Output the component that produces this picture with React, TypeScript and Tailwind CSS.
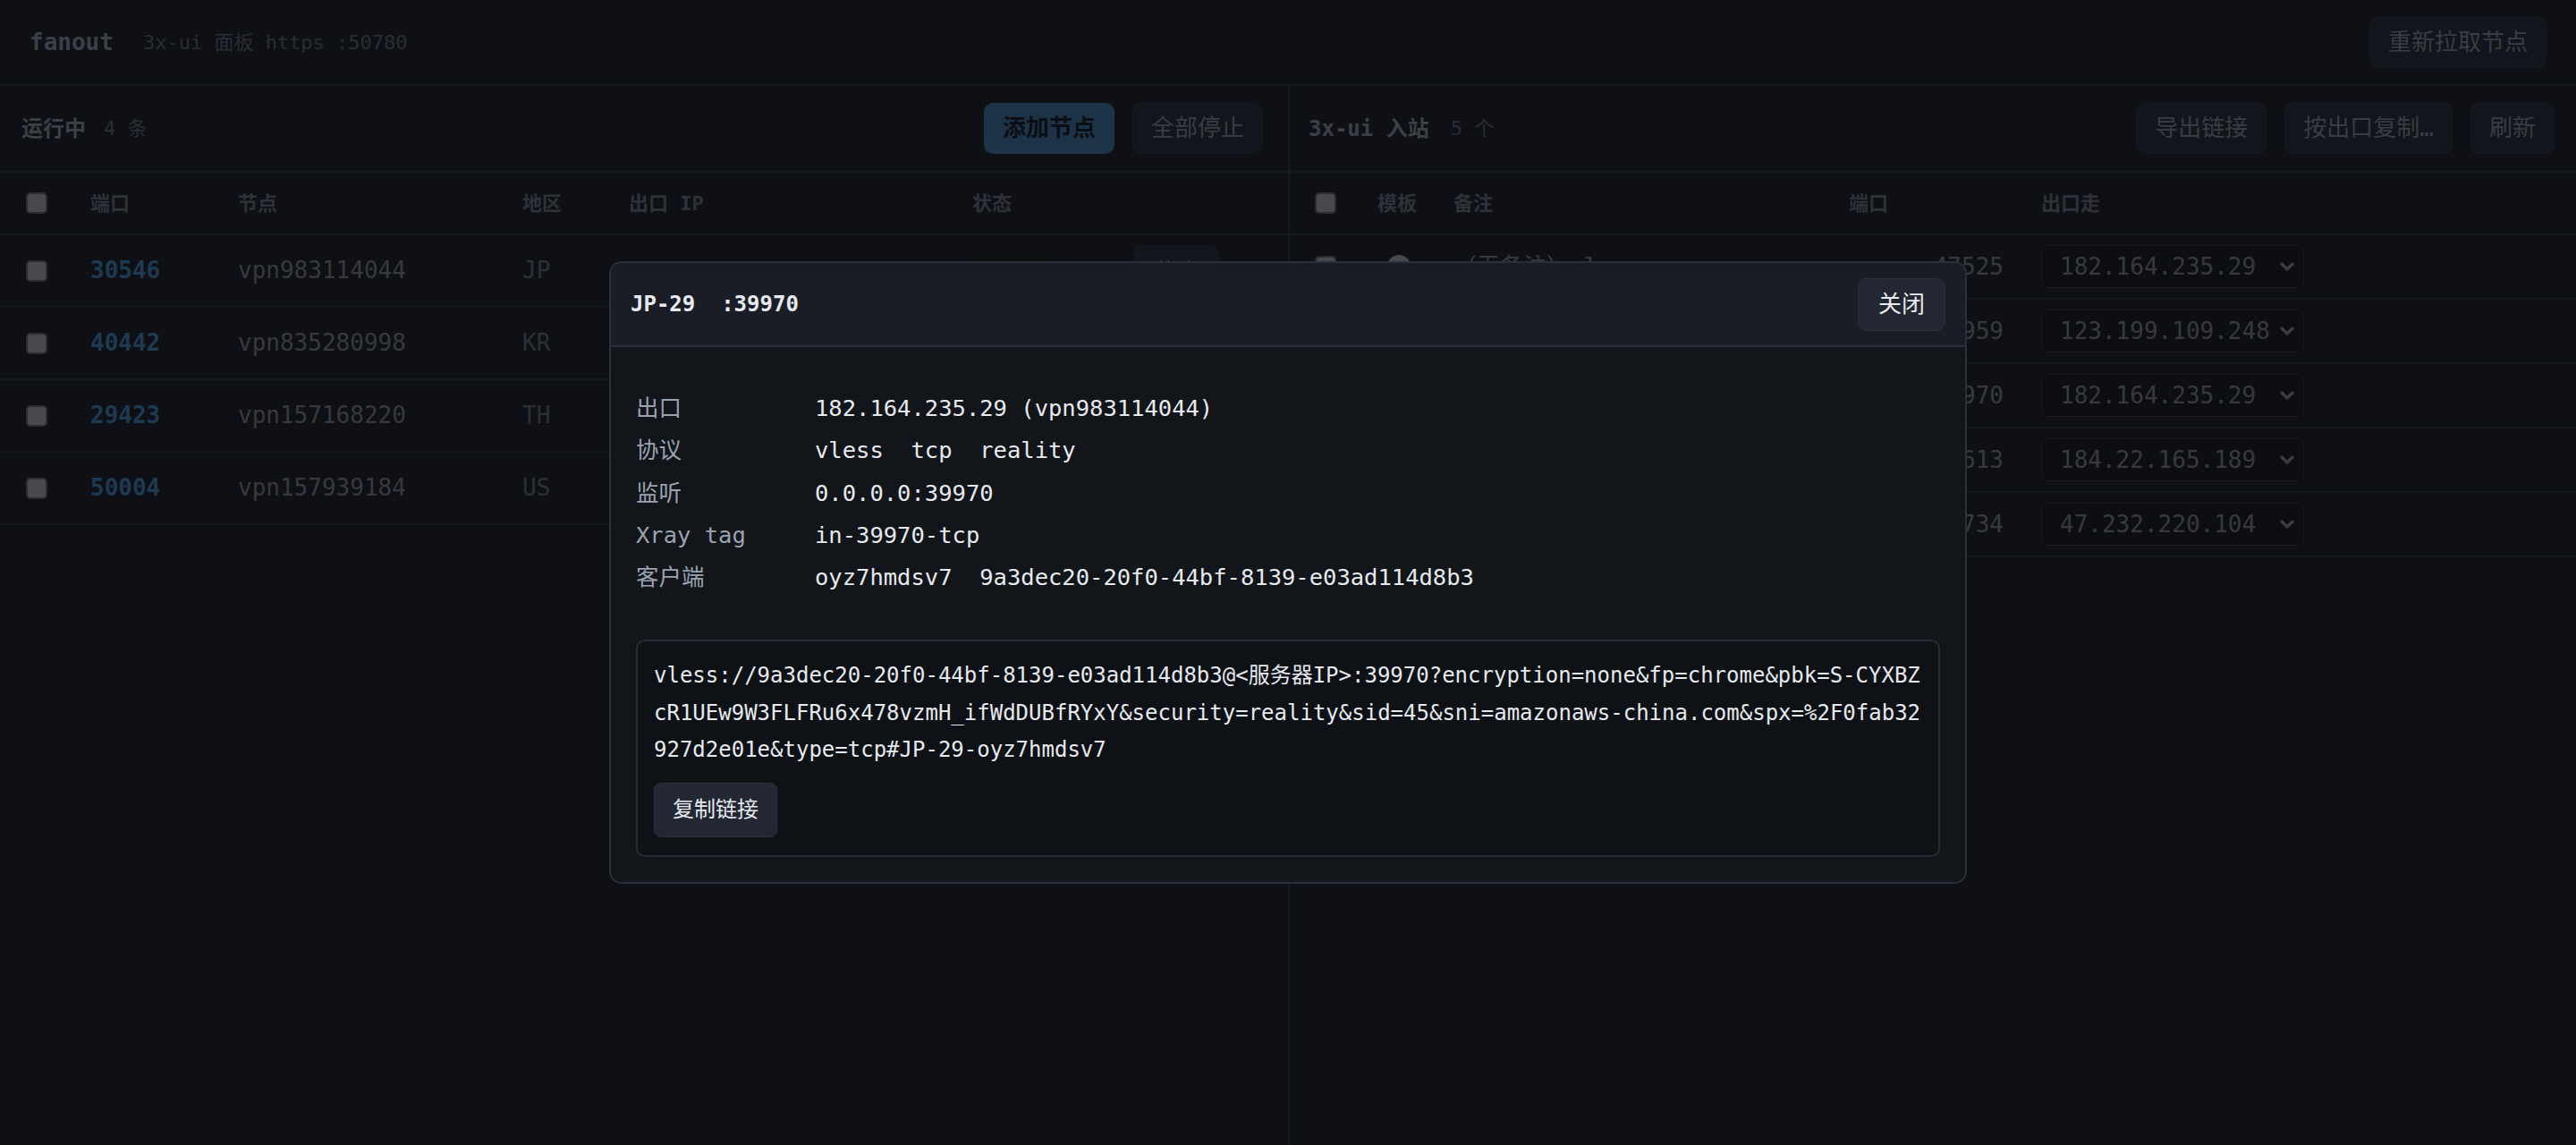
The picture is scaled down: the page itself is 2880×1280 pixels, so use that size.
import { ChevronDown } from "lucide-react";

const nodes = [
  { port: "30546", name: "vpn983114044", region: "JP", ip: "182.164.235.29" },
  { port: "40442", name: "vpn835280998", region: "KR", ip: "123.199.109.248" },
  { port: "29423", name: "vpn157168220", region: "TH", ip: "184.22.165.189" },
  { port: "50004", name: "vpn157939184", region: "US", ip: "47.232.220.104" },
];

const inbounds = [
  { remark: "（无备注）vless", port: "47525", exit: "182.164.235.29" },
  { remark: "（无备注）vless", port: "28959", exit: "123.199.109.248" },
  { remark: "JP-29", port: "39970", exit: "182.164.235.29" },
  { remark: "TH-13", port: "51613", exit: "184.22.165.189" },
  { remark: "US-04", port: "22734", exit: "47.232.220.104" },
];

const details = [
  ["出口", "182.164.235.29 (vpn983114044)"],
  ["协议", "vless  tcp  reality"],
  ["监听", "0.0.0.0:39970"],
  ["Xray tag", "in-39970-tcp"],
  ["客户端", "oyz7hmdsv7  9a3dec20-20f0-44bf-8139-e03ad114d8b3"],
];

const link =
  "vless://9a3dec20-20f0-44bf-8139-e03ad114d8b3@<服务器IP>:39970?encryption=none&fp=chrome&pbk=S-CYXBZcR1UEw9W3FLFRu6x478vzmH_ifWdDUBfRYxY&security=reality&sid=45&sni=amazonaws-china.com&spx=%2F0fab32927d2e01e&type=tcp#JP-29-oyz7hmdsv7";

function Checkbox() {
  return <div className="h-[24px] w-[24px] rounded-[5px] border-2 border-[#6b7079] bg-[#b2b7c1]" />;
}

function GhostButton({ children }: { children: React.ReactNode }) {
  return (
    <button className="h-[57px] rounded-[10px] border border-[#373f4b] bg-[#2d3544] px-[20px] text-[26px] text-[#8f97a6]">
      {children}
    </button>
  );
}

function NodesPanel() {
  return (
    <section className="flex w-[1442px] flex-col border-r-2 border-[#353c49]">
      <div className="flex h-[97px] items-center border-b-2 border-[#353c49] pl-[24px] pr-[28px]">
        <span className="text-[24px] font-bold text-[#969ead]">运行中</span>
        <span className="ml-[20px] text-[22px] text-[#697180]">4 条</span>
        <div className="ml-auto flex gap-[20px]">
          <button className="h-[57px] rounded-[10px] bg-[#4680b4] px-[21px] text-[26px] font-bold text-[#1c232d]">
            添加节点
          </button>
          <GhostButton>全部停止</GhostButton>
        </div>
      </div>

      <div className="grid h-[70px] grid-cols-[72px_165px_318px_119px_384px_181px_1fr] items-center border-b-2 border-[#323a46] pl-[29px] text-[22px] font-bold text-[#737b8a]">
        <Checkbox />
        <span>端口</span>
        <span>节点</span>
        <span>地区</span>
        <span>出口 IP</span>
        <span>状态</span>
        <span />
      </div>

      {nodes.map((n) => (
        <div
          key={n.port}
          className="grid h-[81px] grid-cols-[72px_165px_318px_119px_384px_181px_1fr] items-center border-b-2 border-[#323a46] pl-[29px] text-[26px]"
        >
          <Checkbox />
          <span className="font-bold text-[#4c8ec9]">{n.port}</span>
          <span className="text-[#8a8f9b]">{n.name}</span>
          <span className="text-[#717887]">{n.region}</span>
          <span className="text-[22px] text-[#8a8f9b]">{n.ip}</span>
          <span className="w-fit rounded-[8px] bg-[#1f2f2c] px-[14px] py-[7px] text-[20px] leading-[24px] text-[#5fae84]">运行中</span>
          <button className="h-[58px] w-[95px] rounded-[10px] border border-[#373f4b] bg-[#2d3546] text-[24px] text-[#9199a8]">
            停止
          </button>
        </div>
      ))}
    </section>
  );
}

function InboundsPanel() {
  return (
    <section className="flex flex-1 flex-col">
      <div className="flex h-[97px] items-center border-b-2 border-[#353c49] pl-[21px] pr-[24px]">
        <span className="text-[24px] font-bold text-[#969ead]">3x-ui 入站</span>
        <span className="ml-[24px] text-[22px] text-[#697180]">5 个</span>
        <div className="ml-auto flex gap-[20px]">
          <GhostButton>导出链接</GhostButton>
          <GhostButton>按出口复制…</GhostButton>
          <GhostButton>刷新</GhostButton>
        </div>
      </div>

      <div className="grid h-[70px] grid-cols-[70px_85px_442px_173px_42px_1fr] items-center border-b-2 border-[#323a46] pl-[28px] text-[22px] font-bold text-[#737b8a]">
        <Checkbox />
        <span>模板</span>
        <span>备注</span>
        <span>端口</span>
        <span />
        <span>出口走</span>
      </div>

      {inbounds.map((r) => (
        <div
          key={r.port}
          className="grid h-[72px] grid-cols-[70px_85px_442px_173px_42px_1fr] items-center border-b-2 border-[#323a46] pl-[28px] text-[26px]"
        >
          <Checkbox />
          <div className="ml-[11px] h-[26px] w-[26px] rounded-full bg-[#b2b7c1]" />
          <span className="text-[#8a8f9b]">{r.remark}</span>
          <span className="text-right text-[#8a8f9b]">{r.port}</span>
          <span />
          <div className="flex h-[48px] w-[294px] items-center justify-between rounded-[8px] border border-[#3a3f4b] bg-[#1e232d] pl-[20px] pr-[6px] text-[#8a8f9b]">
            <span>{r.exit}</span>
            <ChevronDown size={24} strokeWidth={3.5} className="text-[#91969f]" />
          </div>
        </div>
      ))}
    </section>
  );
}

function InboundModal() {
  return (
    <div className="w-[1518px] overflow-hidden rounded-[14px] border-2 border-[#2a2f38] bg-[#12151a]">
      <div className="flex h-[94px] items-center justify-between border-b-2 border-[#2a2f38] bg-[#1a1d25] pl-[22px] pr-[22px]">
        <span className="whitespace-pre text-[24px] font-bold text-[#e6e9ef]">JP-29  :39970</span>
        <button className="h-[59px] rounded-[10px] border border-[#2a303a] bg-[#222732] px-[22px] text-[26px] text-[#e8eaee]">
          关闭
        </button>
      </div>

      <div className="px-[28px] pb-[28px] pt-[45px]">
        <div className="flex flex-col text-[25.5px] leading-[47.3px]">
          {details.map(([k, v]) => (
            <div key={k} className="flex">
              <span className="w-[200px] shrink-0 text-[#9aa3af]">{k}</span>
              <span className="whitespace-pre text-[#e6e9ee]">{v}</span>
            </div>
          ))}
        </div>

        <div className="mt-[46px] rounded-[10px] border-2 border-[#262b34] bg-[#0e1115] px-[18px] pb-[20px] pt-[18px]">
          <div className="break-all text-[24px] leading-[41.5px] text-[#e6e9ee]">{link}</div>
          <button className="mt-[15px] h-[61px] rounded-[8px] border border-[#2b303b] bg-[#222733] px-[20px] text-[24px] text-[#e6e9ee]">
            复制链接
          </button>
        </div>
      </div>
    </div>
  );
}

export default function App() {
  return (
    <div className="relative flex h-[1280px] w-[2880px] flex-col overflow-hidden bg-[#232835] font-['DejaVu_Sans_Mono','Noto_Sans_CJK_SC',monospace]">
      <header className="flex h-[96px] shrink-0 items-center border-b-2 border-[#353c49] pl-[33px] pr-[33px]">
        <span className="text-[26px] font-bold text-[#969ead]">fanout</span>
        <span className="ml-[33px] text-[22px] text-[#697180]">3x-ui 面板 https :50780</span>
        <div className="ml-auto">
          <GhostButton>重新拉取节点</GhostButton>
        </div>
      </header>

      <main className="flex flex-1">
        <NodesPanel />
        <InboundsPanel />
      </main>

      <div className="absolute inset-0 flex items-center justify-center bg-black/60">
        <InboundModal />
      </div>
    </div>
  );
}
